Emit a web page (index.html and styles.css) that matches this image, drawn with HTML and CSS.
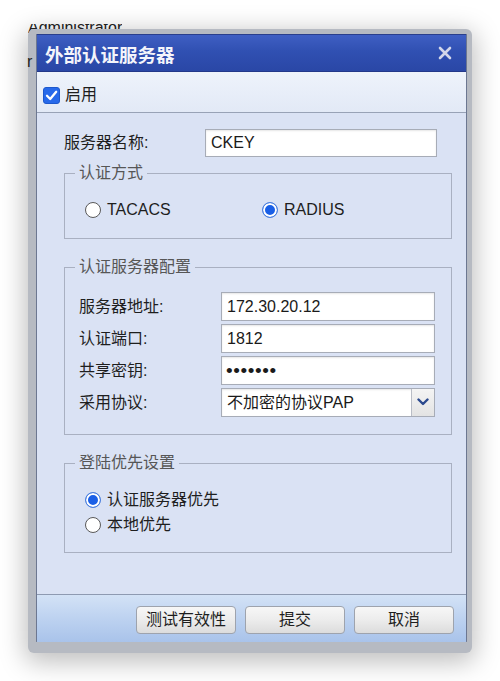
FILE: index.html
```html
<!DOCTYPE html>
<html lang="zh-CN">
<head>
<meta charset="utf-8">
<title>外部认证服务器</title>
<link rel="stylesheet" href="styles.css">
</head>
<body>
<div class="page">
  <div class="bg-admin"><span>Administrator</span></div>
  <div class="bg-r">r</div>
  <div class="frame">
    <div class="dialog">
      <div class="titlebar">
        <span class="title">外部认证服务器</span>
        <svg class="close" width="14" height="14" viewBox="0 0 14 14"><path d="M2 2 L12 12 M12 2 L2 12" stroke="#d3d7ea" stroke-width="2.6" stroke-linecap="round"/></svg>
      </div>
      <div class="toolbar">
        <span class="check"><svg width="17" height="17" viewBox="0 0 17 17"><path d="M4 8.8 L7.2 12 L13.2 4.8" fill="none" stroke="#fff" stroke-width="2.3" stroke-linecap="round" stroke-linejoin="round"/></svg></span>
        <span class="tb-label">启用</span>
      </div>
      <div class="content">
        <div class="name-row">
          <span class="label">服务器名称:</span>
          <div class="input name-input">CKEY</div>
        </div>
        <fieldset class="fs fs1">
          <legend>认证方式</legend>
          <div class="radio-inline">
            <div class="opt opt-a"><span class="radio"></span><span>TACACS</span></div>
            <div class="opt"><span class="radio on"></span><span>RADIUS</span></div>
          </div>
        </fieldset>
        <fieldset class="fs fs2">
          <legend>认证服务器配置</legend>
          <div class="grid">
            <span class="label">服务器地址:</span>
            <div class="input">172.30.20.12</div>
            <span class="label">认证端口:</span>
            <div class="input">1812</div>
            <span class="label">共享密钥:</span>
            <div class="input pw">•••••••</div>
            <span class="label">采用协议:</span>
            <div class="input select">
              <span class="sel-text">不加密的协议PAP</span>
              <span class="sel-btn"><svg width="12" height="8" viewBox="0 0 12 8"><path d="M1.5 1.5 L6 6 L10.5 1.5" fill="none" stroke="#2c4a8e" stroke-width="2.4" stroke-linecap="round" stroke-linejoin="round"/></svg></span>
            </div>
          </div>
        </fieldset>
        <fieldset class="fs fs3">
          <legend>登陆优先设置</legend>
          <div class="radio-col">
            <div class="opt"><span class="radio on"></span><span>认证服务器优先</span></div>
            <div class="opt"><span class="radio"></span><span>本地优先</span></div>
          </div>
        </fieldset>
      </div>
      <div class="footer">
        <button class="btn">测试有效性</button>
        <button class="btn">提交</button>
        <button class="btn">取消</button>
      </div>
    </div>
  </div>
</div>
</body>
</html>
```
FILE: styles.css
```css
* { box-sizing: border-box; }
html, body { margin: 0; padding: 0; background: #ffffff; }
body {
  font-family: "Liberation Sans", "Noto Sans CJK SC", sans-serif;
  font-size: 16px;
  color: #1e1e1e;
}
.page {
  position: relative;
  width: 500px;
  height: 681px;
  overflow: hidden;
  padding-top: 29px;
  padding-left: 28px;
}
.bg-admin {
  position: absolute;
  left: 28px;
  top: 24px;
  height: 10px;
  overflow: hidden;
  z-index: 0;
}
.bg-admin span {
  display: block;
  margin-top: -5px;
  line-height: 18px;
  color: #222;
}
.bg-r {
  position: absolute;
  left: 27px;
  top: 53px;
  line-height: 18px;
  color: #222;
  z-index: 2;
}
.frame {
  position: relative;
  z-index: 1;
  width: 444px;
  height: 624px;
  padding: 5px 5px 11px 8px;
  background: #b6bac2;
  border-radius: 6px;
  box-shadow: 0 6px 26px 3px rgba(0, 0, 0, 0.26);
}
.dialog {
  width: 431px;
  height: 608px;
  display: flex;
  flex-direction: column;
  border-left: 1px solid #6c7791;
  border-right: 1px solid #6c7791;
  border-bottom: 1px solid #7d869a;
  background: #dae2f4;
  position: relative;
  z-index: 3;
}
.titlebar {
  height: 38px;
  flex: none;
  display: flex;
  align-items: center;
  justify-content: space-between;
  padding: 0 14px 0 8px;
  background: linear-gradient(180deg, #3f5fc3 0%, #3050b2 45%, #2a47a6 100%);
  border-top: 1px solid #2a3f8c;
  border-bottom: 1px solid #23388a;
}
.title {
  color: #f4f5fb;
  font-family: "Noto Sans CJK SC", sans-serif;
  font-weight: bold;
  font-size: 18.5px;
  line-height: 24px;
  margin-top: 2px;
}
.close { display: block; margin-top: -1px; }
.toolbar {
  height: 41px;
  flex: none;
  display: flex;
  align-items: center;
  gap: 5px;
  padding: 6px 0 0 6px;
  background: linear-gradient(180deg, #eef3fb 0%, #e2e9f6 100%);
  border-bottom: 1px solid #98a2b6;
}
.check {
  width: 17px;
  height: 17px;
  border-radius: 3px;
  background: #2769ea;
  border: 1px solid #1d58cc;
  display: flex;
  align-items: center;
  justify-content: center;
}
.check svg { display: block; margin: -1px; }
.tb-label { line-height: 20px; font-size: 16px; }
.content {
  height: 481px;
  flex: none;
  padding: 16px 14px 0 27px;
  display: flex;
  flex-direction: column;
}
.label { line-height: 20px; color: #1e1e1e; }
.name-row {
  display: flex;
  align-items: center;
  height: 28px;
}
.name-row .label { width: 141px; flex: none; }
.input {
  height: 28px;
  background: #ffffff;
  border: 1px solid #a7acb7;
  box-shadow: inset 0 1px 2px rgba(0, 0, 0, 0.10);
  padding: 0 5px;
  display: flex;
  align-items: center;
  font-size: 16px;
  color: #1a1a1a;
}
.name-input { width: 232px; }
.fs {
  margin: 0;
  padding: 0;
  border: 1px solid #a9b0c1;
  min-width: 0;
}
.fs legend {
  margin-left: 10px;
  padding: 0 4px;
  line-height: 20px;
  font-size: 16px;
  color: #565656;
}
.fs1 { margin-top: 6px; height: 76px; padding-top: 17px; }
.fs2 { margin-top: 18px; height: 178px; padding-top: 15px; }
.fs3 { margin-top: 18px; height: 100px; padding-top: 14px; }
.radio-inline { display: flex; align-items: center; height: 20px; padding-left: 20px; }
.opt { display: flex; align-items: center; gap: 6px; line-height: 20px; }
.opt-a { width: 177px; }
.radio {
  width: 16px;
  height: 16px;
  flex: none;
  border-radius: 50%;
  border: 1px solid #595959;
  background: #ffffff;
}
.radio.on {
  border: 1.5px solid #4f82dd;
  background: #1a5fe6;
  box-shadow: inset 0 0 0 2px #ffffff;
}
.grid {
  display: grid;
  grid-template-columns: 142px 214px;
  grid-auto-rows: 29px;
  row-gap: 3px;
  align-items: center;
  padding-left: 14px;
}
.grid .input { height: 29px; }
.pw { font-size: 19px; letter-spacing: 0.6px; padding-left: 4px; }
.select { padding: 0 0 0 5px; justify-content: space-between; }
.sel-text { line-height: 20px; }
.sel-btn {
  width: 23px;
  height: 100%;
  border-left: 1px solid #b9bdc6;
  background: linear-gradient(180deg, #f4f4f4 0%, #e3e3e3 100%);
  display: flex;
  align-items: center;
  justify-content: center;
}
.sel-btn svg { display: block; margin-top: -2px; }
.radio-col { display: flex; flex-direction: column; padding-left: 20px; }
.radio-col .opt { height: 25px; }
.footer {
  height: 48px;
  flex: none;
  border-top: 1px solid #8e9ab1;
  background: linear-gradient(180deg, #d3e2f6 0%, #bdd2f0 50%, #a9c3ea 100%);
  display: flex;
  justify-content: flex-end;
  align-items: flex-start;
  gap: 9px;
  padding: 11px 12px 0 0;
}
.btn {
  width: 100px;
  height: 28px;
  margin: 0;
  padding: 0;
  border: 1px solid #9ea3ad;
  border-radius: 4px;
  background: linear-gradient(180deg, #f7f7f7 0%, #ececec 50%, #dcdcdc 100%);
  font-family: "Liberation Sans", "Noto Sans CJK SC", sans-serif;
  font-size: 16px;
  color: #1e1e1e;
  line-height: 20px;
}
```
